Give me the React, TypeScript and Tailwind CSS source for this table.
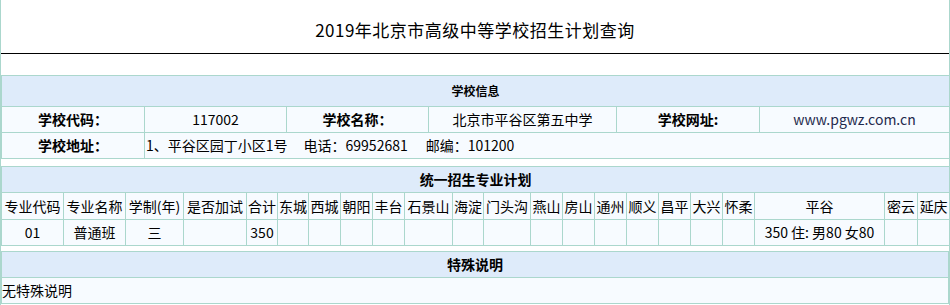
// Admission plan lookup page: school info, unified admission plan, special notes.

const line = 'border border-[#abd7cd]'
const head = `${line} bg-[#deebfa] text-center font-bold`
const cell = `${line} bg-[#f7fbff] text-center`
const label = `${cell} font-bold`

const districts = [
    '东城', '西城', '朝阳', '丰台', '石景山', '海淀', '门头沟', '燕山', '房山', '通州',
    '顺义', '昌平', '大兴', '怀柔', '平谷', '密云', '延庆',
]

// column widths of the plan table, left to right
const planCols = [
    62, 62, 58, 63, 31,
    31, 32, 32, 32, 48, 31, 47, 32, 32, 32, 32, 32, 32, 32, 130, 33, 32,
]

const planRow: Record<string, string> = {
    平谷: '350 住: 男80 女80',
}

export default function App() {
    return (
        <div className="w-[950px] min-h-[305px] border-x border-[#abd7cd] bg-white text-black font-['Noto_Sans_CJK_SC','Noto_Sans',sans-serif]">
            <div className="h-[54px] border-b border-black flex items-center justify-center pt-[7px] text-[17px] tracking-[0.5px]">
                2019年北京市高级中等学校招生计划查询
            </div>

            {/* 学校信息 */}
            <table className="mt-[21px] w-full table-fixed border-collapse text-[14px]">
                <colgroup>
                    <col className="w-[143px]" />
                    <col className="w-[142px]" />
                    <col className="w-[142px]" />
                    <col className="w-[188px]" />
                    <col className="w-[143px]" />
                    <col className="w-[190px]" />
                </colgroup>
                <tbody>
                    <tr>
                        <td colSpan={6} className={`${head} h-[31px] text-[12px]`}>学校信息</td>
                    </tr>
                    <tr className="h-[26px]">
                        <td className={label}>学校代码：</td>
                        <td className={cell}>117002</td>
                        <td className={label}>学校名称：</td>
                        <td className={cell}>北京市平谷区第五中学</td>
                        <td className={label}>学校网址:</td>
                        <td className={`${cell} text-[#1f2a4d]`}>www.pgwz.com.cn</td>
                    </tr>
                    <tr className="h-[26px]">
                        <td className={label}>学校地址：</td>
                        <td colSpan={5} className={`${cell} text-left pl-px`}>
                            1、平谷区园丁小区1号
                            <span className="ml-4">电话：69952681</span>
                            <span className="ml-[18px]">邮编：101200</span>
                        </td>
                    </tr>
                </tbody>
            </table>

            {/* 统一招生专业计划 */}
            <table className="mt-[7px] w-full table-fixed border-collapse text-[14px]">
                <colgroup>
                    {planCols.map((w, i) => (
                        <col key={i} style={{ width: w }} />
                    ))}
                </colgroup>
                <tbody>
                    <tr>
                        <td colSpan={22} className={`${head} h-[26px]`}>统一招生专业计划</td>
                    </tr>
                    <tr className="h-[27px]">
                        <td className={`${cell} whitespace-nowrap`}>专业代码</td>
                        <td className={`${cell} whitespace-nowrap`}>专业名称</td>
                        <td className={`${cell} whitespace-nowrap`}>学制(年)</td>
                        <td className={`${cell} whitespace-nowrap`}>是否加试</td>
                        <td className={`${cell} whitespace-nowrap`}>合计</td>
                        {districts.map(d => (
                            <td key={d} className={`${cell} whitespace-nowrap`}>{d}</td>
                        ))}
                    </tr>
                    <tr className="h-[26px]">
                        <td className={cell}>01</td>
                        <td className={cell}>普通班</td>
                        <td className={cell}>三</td>
                        <td className={cell}></td>
                        <td className={cell}>350</td>
                        {districts.map(d => (
                            <td key={d} className={`${cell} whitespace-nowrap`}>{planRow[d] ?? ''}</td>
                        ))}
                    </tr>
                </tbody>
            </table>

            {/* 特殊说明 */}
            <table className="mt-[5px] w-full border-collapse text-[14px]">
                <tbody>
                    <tr>
                        <td className={`${head} h-[26px]`}>特殊说明</td>
                    </tr>
                    <tr>
                        <td className={`${cell} h-[26px] text-left`}>无特殊说明</td>
                    </tr>
                </tbody>
            </table>
        </div>
    )
}
